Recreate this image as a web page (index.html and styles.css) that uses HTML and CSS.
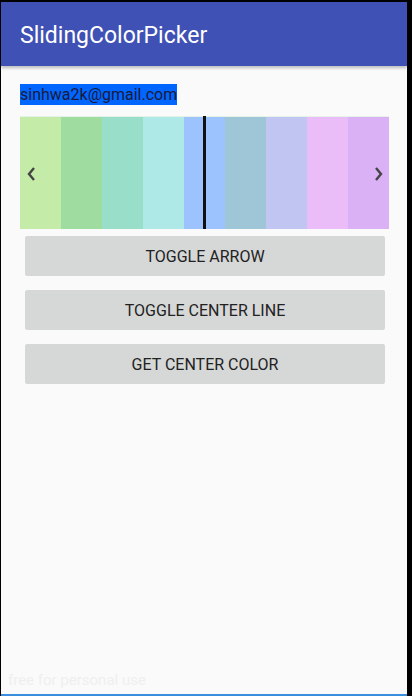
FILE: index.html
```html
<!DOCTYPE html>
<html>
<head>
<meta charset="utf-8">
<link rel="stylesheet" href="styles.css">
</head>
<body>
<div class="frame">
  <div class="screen">
    <header class="appbar"><span class="title">SlidingColorPicker</span></header>
    <main class="content">
      <div class="email-row"><span class="email">sinhwa2k@gmail.com</span></div>
      <div class="strip">
        <div class="seg c1"></div>
        <div class="seg c2"></div>
        <div class="seg c3"></div>
        <div class="seg c4"></div>
        <div class="seg c5"></div>
        <div class="seg c6"></div>
        <div class="seg c7"></div>
        <div class="seg c8"></div>
        <div class="seg c9"></div>
        <div class="center-line"></div>
        <svg class="arrow arrow-left" width="10" height="16" viewBox="0 0 10 16"><path d="M8 2 L3 8 L8 14" fill="none" stroke="#444" stroke-width="2.4"/></svg>
        <svg class="arrow arrow-right" width="10" height="16" viewBox="0 0 10 16"><path d="M2 2 L7 8 L2 14" fill="none" stroke="#444" stroke-width="2.4"/></svg>
      </div>
      <div class="buttons">
        <button class="btn">TOGGLE ARROW</button>
        <button class="btn">TOGGLE CENTER LINE</button>
        <button class="btn">GET CENTER COLOR</button>
      </div>
    </main>
    <div class="watermark">free for personal use</div>
  </div>
  <div class="navstripe"></div>
</div>
</body>
</html>
```
FILE: styles.css
```css
html, body {
  margin: 0;
  padding: 0;
  background: #000;
  overflow: hidden;
}
.frame {
  width: 412px;
  height: 696px;
  padding: 2px 5px 0 1px;
  box-sizing: border-box;
  background: #000;
  display: flex;
  flex-direction: column;
}
.screen {
  width: 406px;
  height: 692px;
  background: #fafafa;
  display: flex;
  flex-direction: column;
  position: relative;
  font-family: Roboto, "Noto Sans", sans-serif;
}
.navstripe {
  height: 2px;
  width: 406px;
  background: #3a8ee0;
}
.appbar {
  height: 64px;
  background: #3f51b5;
  display: flex;
  align-items: center;
  padding-left: 19px;
  box-shadow: 0 2px 3px rgba(0,0,0,0.25);
  position: relative;
  z-index: 1;
}
.title {
  color: #fff;
  font-size: 23px;
  margin-top: 2px;
}
.content {
  padding: 18px 18px 0 19px;
  flex: 1;
}
.email-row {
  height: 21px;
}
.email {
  background: #0066ff;
  color: #1a1a3a;
  font-size: 16px;
  line-height: 21px;
  display: inline-block;
}
.strip {
  margin-top: 11px;
  height: 113px;
  display: flex;
  position: relative;
  border-top: 1px solid #e4f2e8;
  box-sizing: border-box;
}
.seg { flex: 1; }
.c1 { background: #c5eba8; }
.c2 { background: #9edca0; }
.c3 { background: #98dec8; }
.c4 { background: #aee9e8; }
.c5 { background: #9cc3fd; }
.c6 { background: #9ec6d7; }
.c7 { background: #c0c6f1; }
.c8 { background: #eabdf9; }
.c9 { background: #d9b1f4; }
.center-line {
  position: absolute;
  left: 183px;
  top: -1px;
  bottom: 0;
  width: 3px;
  background: #111;
}
.arrow {
  position: absolute;
  top: 49px;
}
.arrow-left { left: 6px; }
.arrow-right { right: 5px; }
.buttons {
  display: flex;
  flex-direction: column;
  gap: 14px;
  padding: 7px 4px 0 5px;
}
.btn {
  height: 40px;
  border: none;
  border-radius: 2px;
  background: #d6d7d7;
  color: #222;
  font-family: Roboto, "Noto Sans", sans-serif;
  font-size: 16px;
  padding: 0;
}
.watermark {
  position: absolute;
  left: 7px;
  bottom: 5px;
  font-size: 15px;
  color: #efefef;
}
```
